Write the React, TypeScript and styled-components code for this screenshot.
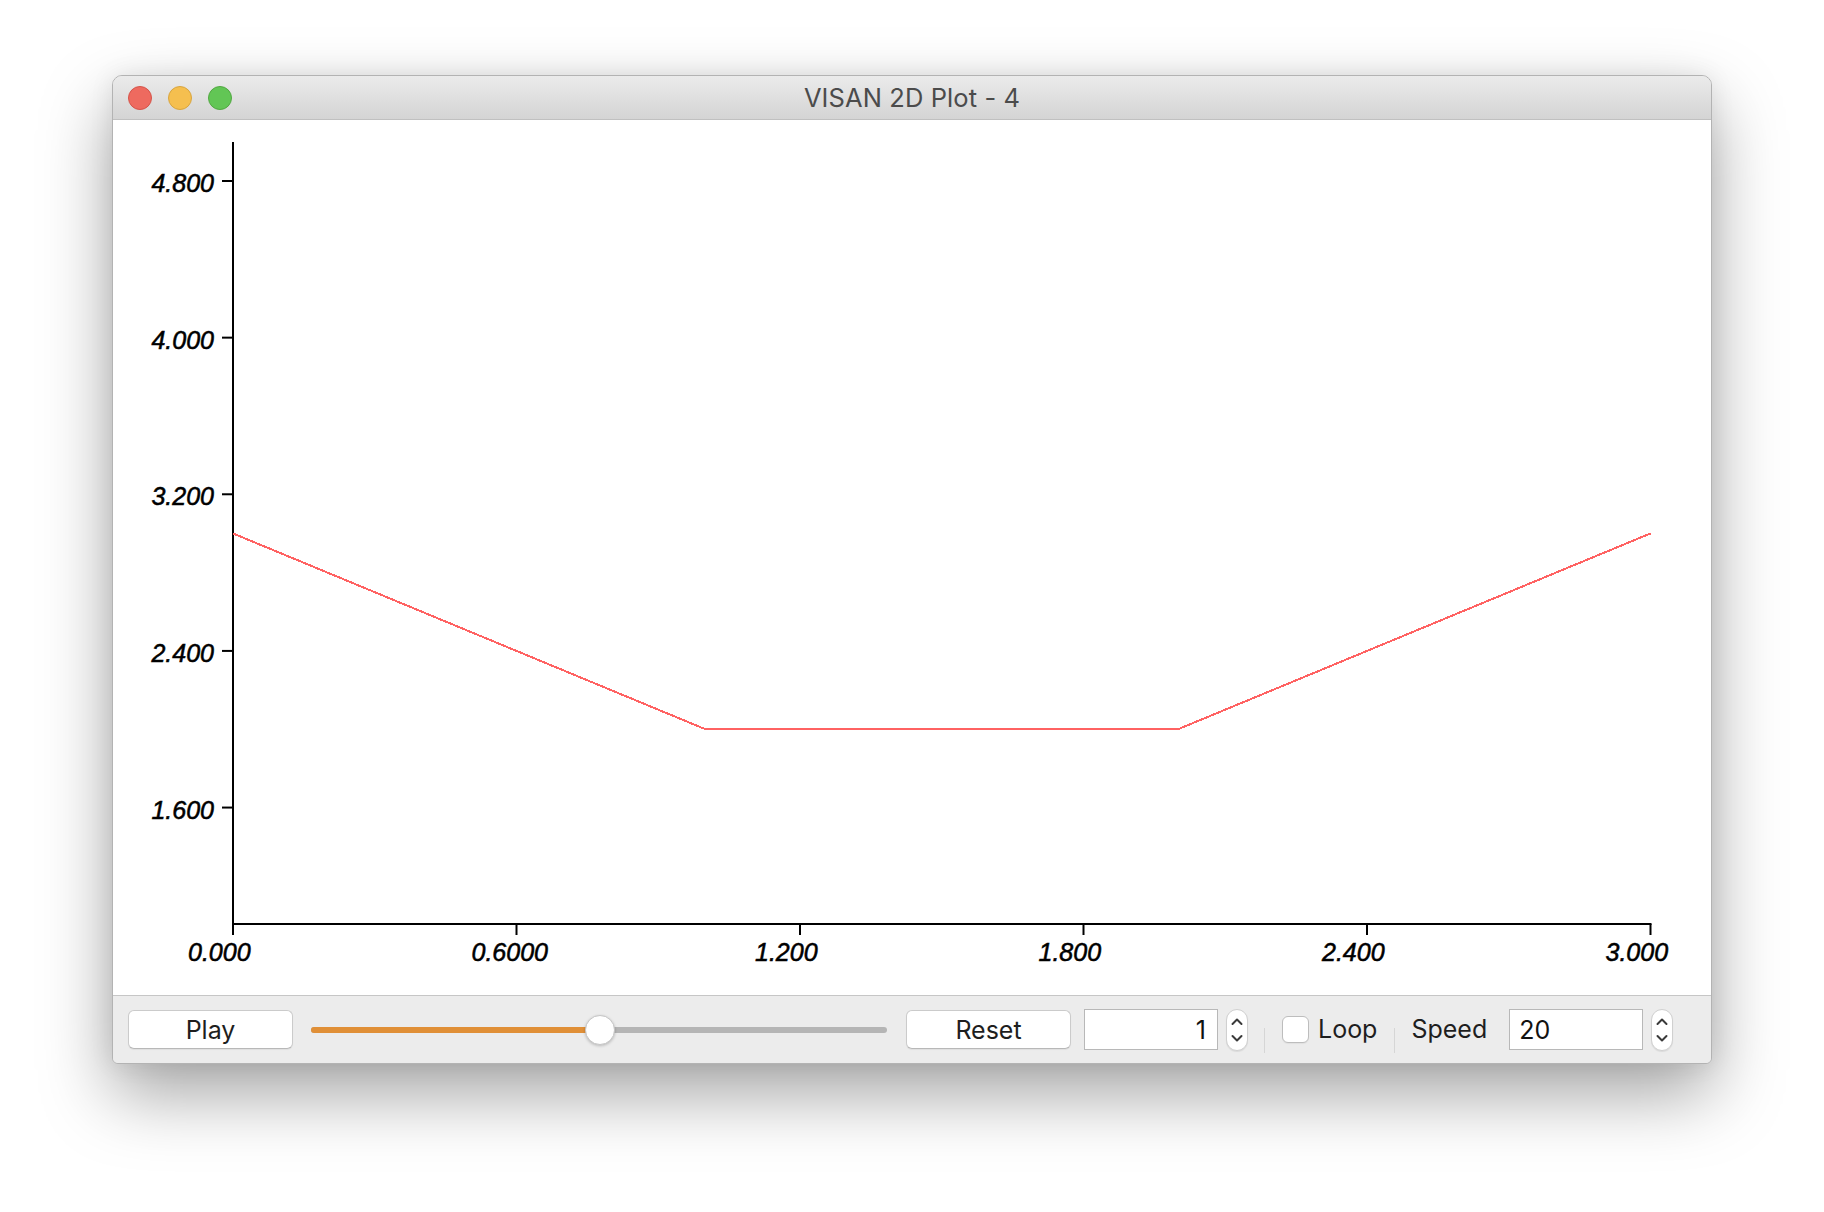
import React from "react";
import styled, { createGlobalStyle } from "styled-components";

const X_TICKS = ["0.000", "0.6000", "1.200", "1.800", "2.400", "3.000"];
const Y_TICKS = ["4.800", "4.000", "3.200", "2.400", "1.600"];
const DATA: [number, number][] = [
    [0, 3],
    [1, 2],
    [2, 2],
    [3, 3],
];

// plot geometry, in page pixels
const ORIGIN_X = 233;
const X_UNIT = 472.5;
const AXIS_Y = 924;
const AXIS_TOP = 142;
const Y_AT_48 = 181;
const Y_UNIT = 195.8;

const xPx = (v: number) => ORIGIN_X + v * X_UNIT;
const yPx = (v: number) => Y_AT_48 + (4.8 - v) * Y_UNIT;

const GlobalStyle = createGlobalStyle`
    html, body {
        margin: 0;
        padding: 0;
        background: #ffffff;
    }

    body {
        font-family: Inter, "Noto Sans", sans-serif;
    }
`;

const Page = styled.div`
    width: 1824px;
    height: 1212px;
    box-sizing: border-box;
    padding: 75px 0 0 112px;
    overflow: hidden;
`;

const Window = styled.div`
    width: 1600px;
    height: 989px;
    box-sizing: border-box;
    display: flex;
    flex-direction: column;
    border: 1px solid #b3b3b3;
    border-radius: 10px 10px 6px 6px;
    overflow: hidden;
    background: #ececec;
    box-shadow: 0 30px 70px rgba(0, 0, 0, 0.36), 0 0 24px rgba(0, 0, 0, 0.08);
`;

const TitleBar = styled.div`
    height: 44px;
    flex: none;
    box-sizing: border-box;
    display: grid;
    grid-template-columns: 1fr auto 1fr;
    align-items: center;
    padding: 0 15px;
    background: linear-gradient(#ebebeb, #d4d4d4);
    border-bottom: 1px solid #c0c0c0;
`;

const Lights = styled.div`
    display: flex;
    gap: 16px;
`;

const Light = styled.span<{ $fill: string; $edge: string }>`
    width: 24px;
    height: 24px;
    box-sizing: border-box;
    border-radius: 50%;
    background: ${(p) => p.$fill};
    border: 1px solid ${(p) => p.$edge};
`;

const Title = styled.div`
    font-size: 25.5px;
    color: #4b4b4b;
    letter-spacing: 0.1px;
`;

const PlotArea = styled.div`
    flex: 1;
    background: #ffffff;
    display: flex;
`;

const Toolbar = styled.div`
    height: 68px;
    flex: none;
    box-sizing: border-box;
    display: flex;
    align-items: center;
    padding-left: 15px;
    border-top: 1px solid #c6c6c6;
    background: #ececec;
    font-size: 25px;
    color: #1e1e1e;
`;

const PushButton = styled.div<{ $ml?: number }>`
    width: 165px;
    height: 39px;
    box-sizing: border-box;
    margin-left: ${(p) => p.$ml ?? 0}px;
    display: flex;
    align-items: center;
    justify-content: center;
    background: #ffffff;
    border: 1px solid #cbcbcb;
    border-bottom-color: #b8b8b8;
    border-radius: 6px;
    box-shadow: 0 1px 1px rgba(0, 0, 0, 0.06);
`;

const Slider = styled.div`
    position: relative;
    width: 576px;
    height: 30px;
    margin-left: 18px;
    display: flex;
    align-items: center;
`;

const Track = styled.div`
    flex: 1;
    height: 6px;
    border-radius: 3px;
    background: #b5b5b5;
    overflow: hidden;
`;

const TrackFill = styled.div`
    height: 100%;
    background: #e08f37;
`;

const Thumb = styled.div`
    position: absolute;
    top: 0;
    width: 30px;
    height: 30px;
    box-sizing: border-box;
    margin-left: -15px;
    border-radius: 50%;
    background: #ffffff;
    border: 1px solid #c6c6c6;
    box-shadow: 0 1px 3px rgba(0, 0, 0, 0.22);
`;

const Field = styled.input<{ $ml: number; $align: "left" | "right" }>`
    width: 134px;
    height: 41px;
    box-sizing: border-box;
    margin: 0 0 0 ${(p) => p.$ml}px;
    padding: 0 11px 0 9px;
    border: 1px solid #b8b8b8;
    border-radius: 0;
    background: #ffffff;
    outline: none;
    font-family: Inter, "Noto Sans", sans-serif;
    font-size: 25px;
    color: #111111;
    text-align: ${(p) => p.$align};
`;

const Spin = styled.div`
    width: 22px;
    height: 42px;
    box-sizing: border-box;
    margin-left: 8px;
    display: flex;
    align-items: center;
    justify-content: center;
    background: #ffffff;
    border: 1px solid #d0d0d0;
    border-radius: 11px;
    box-shadow: 0 1px 1px rgba(0, 0, 0, 0.08);
`;

const Divider = styled.span<{ $ml: number }>`
    width: 1px;
    height: 25px;
    margin-left: ${(p) => p.$ml}px;
    align-self: flex-end;
    margin-bottom: 10px;
    background: #d6d6d6;
`;

const CheckBox = styled.span`
    width: 27px;
    height: 27px;
    box-sizing: border-box;
    margin-left: 17px;
    border-radius: 6px;
    background: #ffffff;
    border: 1px solid #bdbdbd;
    box-shadow: 0 1px 1px rgba(0, 0, 0, 0.05);
`;

const Label = styled.span<{ $ml: number }>`
    margin-left: ${(p) => p.$ml}px;
    line-height: 1;
`;

const PlotSvg = styled.svg`
    display: block;
    font-family: "Liberation Sans", Arial, sans-serif;
    font-style: italic;
    font-size: 25px;

    text {
        fill: #000000;
        stroke: #000000;
        stroke-width: 0.55px;
    }
`;

const SpinArrows = () => (
    <svg width="12" height="26" viewBox="0 0 12 26">
        <path d="M1.5 7 L6 2.5 L10.5 7" fill="none" stroke="#3a3a3a" strokeWidth="2" strokeLinecap="round" strokeLinejoin="round" />
        <path d="M1.5 19 L6 23.5 L10.5 19" fill="none" stroke="#3a3a3a" strokeWidth="2" strokeLinecap="round" strokeLinejoin="round" />
    </svg>
);

const Plot = () => {
    const linePoints = DATA.map(([x, y]) => `${xPx(x)},${yPx(y)}`).join(" ");

    return (
        <PlotSvg width="1598" height="875" viewBox="113 120 1598 875">
            <line x1={ORIGIN_X} y1={AXIS_TOP} x2={ORIGIN_X} y2={AXIS_Y + 1} stroke="#000" strokeWidth="2" />
            <line x1={ORIGIN_X - 1} y1={AXIS_Y} x2={xPx(3) + 1} y2={AXIS_Y} stroke="#000" strokeWidth="2" />

            {Y_TICKS.map((label) => {
                const y = yPx(parseFloat(label));
                return (
                    <g key={label}>
                        <line x1={ORIGIN_X - 11} y1={y} x2={ORIGIN_X} y2={y} stroke="#000" strokeWidth="2" />
                        <text x={214} y={y + 11} textAnchor="end">
                            {label}
                        </text>
                    </g>
                );
            })}

            {X_TICKS.map((label) => {
                const x = xPx(parseFloat(label));
                return (
                    <g key={label}>
                        <line x1={x} y1={AXIS_Y} x2={x} y2={AXIS_Y + 11} stroke="#000" strokeWidth="2" />
                        <text x={x - 45} y={961}>
                            {label}
                        </text>
                    </g>
                );
            })}

            <polyline points={linePoints} fill="none" stroke="#ff6262" strokeWidth="2" shapeRendering="crispEdges" />
        </PlotSvg>
    );
};

const App = () => {
    const frame = 1;
    const progress = 0.502;

    return (
        <React.Fragment>
            <GlobalStyle />
            <Page>
                <Window>
                    <TitleBar>
                        <Lights>
                            <Light $fill="#ee6a5f" $edge="#d5544a" />
                            <Light $fill="#f5bf4f" $edge="#d8a540" />
                            <Light $fill="#62c655" $edge="#52a842" />
                        </Lights>
                        <Title>VISAN 2D Plot - 4</Title>
                        <span />
                    </TitleBar>

                    <PlotArea>
                        <Plot />
                    </PlotArea>

                    <Toolbar>
                        <PushButton>Play</PushButton>
                        <Slider>
                            <Track>
                                <TrackFill style={{ width: `${progress * 100}%` }} />
                            </Track>
                            <Thumb style={{ left: `${progress * 100}%` }} />
                        </Slider>
                        <PushButton $ml={19}>Reset</PushButton>
                        <Field $ml={13} $align="right" value={String(frame)} readOnly />
                        <Spin>
                            <SpinArrows />
                        </Spin>
                        <Divider $ml={16} />
                        <CheckBox />
                        <Label $ml={9}>Loop</Label>
                        <Divider $ml={17} />
                        <Label $ml={16}>Speed</Label>
                        <Field $ml={22} $align="left" value="20" readOnly />
                        <Spin>
                            <SpinArrows />
                        </Spin>
                    </Toolbar>
                </Window>
            </Page>
        </React.Fragment>
    );
};

export default App;
